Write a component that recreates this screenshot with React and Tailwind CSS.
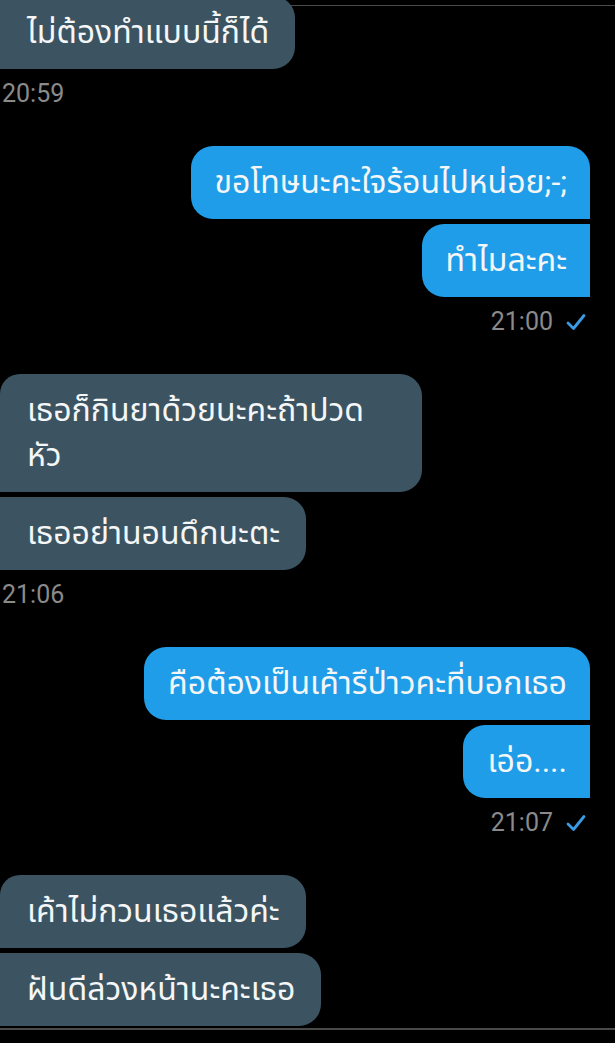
import React from 'react';

const messages = [
    { side: 'in', time: '20:59', items: ['ไม่ต้องทำแบบนี้ก็ได้'], cut: true },
    { side: 'out', time: '21:00', items: ['ขอโทษนะคะใจร้อนไปหน่อย;-;', 'ทำไมละคะ'] },
    { side: 'in', time: '21:06', items: [['เธอก็กินยาด้วยนะคะถ้าปวด', 'หัว'], 'เธออย่านอนดึกนะตะ'] },
    { side: 'out', time: '21:07', items: ['คือต้องเป็นเค้ารึป่าวคะที่บอกเธอ', 'เอ่อ....'] },
    { side: 'in', time: null, items: ['เค้าไม่กวนเธอแล้วค่ะ', 'ฝันดีล่วงหน้านะคะเธอ'] },
];

const Check = () => (
    <svg width="20" height="18" viewBox="0 0 20 18" className="ml-[13px]">
        <path d="M2 10 L7.5 15.5 L18 2.5" fill="none" stroke="#3a9be4" strokeWidth="2.8" strokeLinecap="round" strokeLinejoin="round" />
    </svg>
);

const Bubble = ({ side, text, first }) => {
    const multi = Array.isArray(text);
    const base = 'relative z-10 py-[14px] text-[32px] leading-[45px] text-[#f4f6f7]';
    if (side === 'in') {
        return (
            <div className={`${base} pl-[27px] pr-[26px] bg-[#3c5461] rounded-r-[22px] ${first ? 'rounded-tl-[20px]' : ''} ${multi ? 'w-[422px]' : 'w-fit'}`}>
                {multi ? (<>{text[0]}<br />{text[1]}</>) : text}
            </div>
        );
    }
    return (
        <div className={`${base} pr-[23px] pl-[24px] bg-[#1f9de8] rounded-l-[22px] w-fit self-end ${first ? 'rounded-tr-[22px]' : ''}`}>
            {text}
        </div>
    );
};

const App = () => {
    return (
        <div
            className="relative w-[615px] h-[1043px] bg-black overflow-hidden"
            style={{ fontFamily: "Roboto, 'Noto Sans Thai', 'Noto Sans', 'DejaVu Sans', sans-serif" }}
        >
            <div className="absolute top-[5px] left-0 right-0 h-px bg-[#4a4a4a]" />
            <div className="absolute top-[1028px] left-0 right-0 h-[2px] bg-[#4a4a4a]" />

            <div className="flex flex-col mt-[-4px] pr-[25px]">
                {messages.map((group, gi) => (
                    <div key={gi} className={`flex flex-col gap-[5px] ${gi > 0 ? 'mt-[37px]' : ''}`}>
                        {group.items.map((t, i) => (
                            <Bubble key={i} side={group.side} text={t} first={i === 0 && !group.cut} />
                        ))}
                        {group.time && (
                            <div className={`flex items-center h-[30px] mt-[5px] text-[25px] text-[#8a8a8a] ${group.side === 'out' ? 'justify-end pr-[4px]' : 'pl-[2px]'}`}>
                                <span>{group.time}</span>
                                {group.side === 'out' && <Check />}
                            </div>
                        )}
                    </div>
                ))}
            </div>
        </div>
    );
};

export default App;
